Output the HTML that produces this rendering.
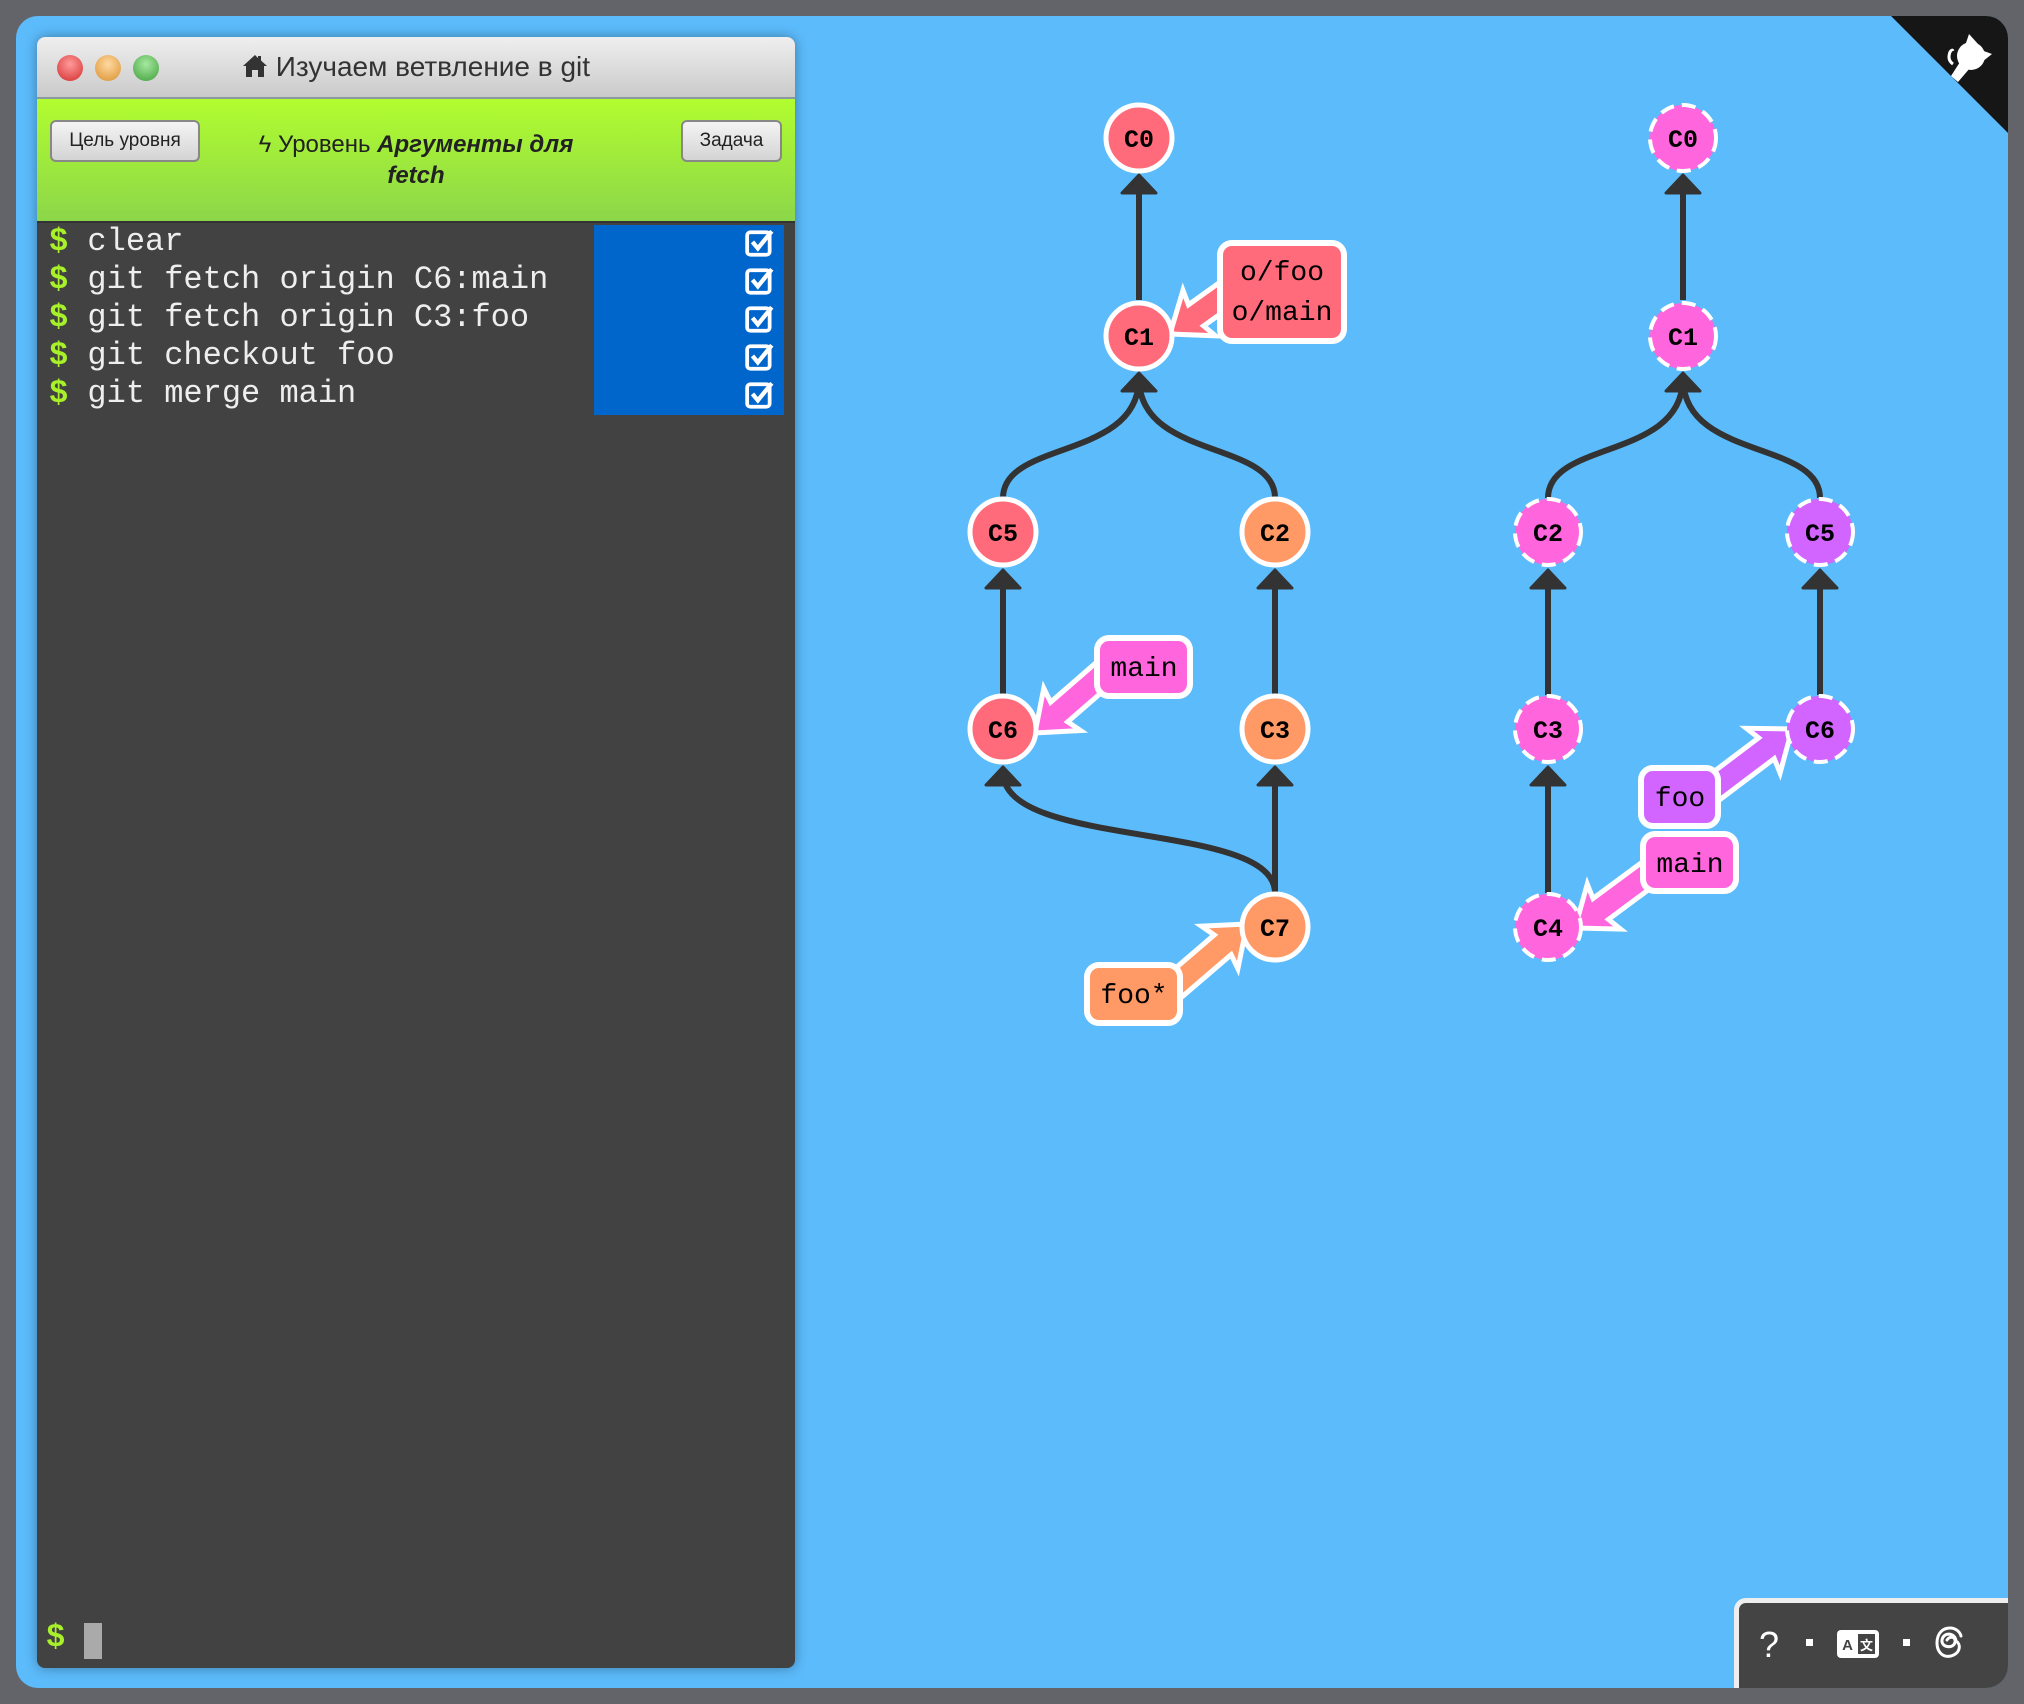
<!DOCTYPE html>
<html><head><meta charset="utf-8"><style>
html,body{margin:0;padding:0;width:2024px;height:1704px;overflow:hidden;background:#636469;font-family:"Liberation Sans","Noto Sans CJK SC",sans-serif}
#bg{position:absolute;left:16px;top:16px;width:1992px;height:1672px;background:#5cbbfb;border-radius:22px;overflow:hidden}
#term{position:absolute;left:37px;top:37px;width:758px;height:1631px;background:#424242;border-radius:8px;box-shadow:0 0 12px rgba(0,0,0,.35);overflow:hidden}
#tbar{position:absolute;left:0;top:0;width:100%;height:60px;background:linear-gradient(#efefef,#cacaca);border-bottom:2px solid #8a9aa0}
.tl{position:absolute;top:18px;width:26px;height:26px;border-radius:50%}
#title{position:absolute;left:0;width:100%;top:14px;text-align:center;font-size:28px;color:#333}
#green{position:absolute;left:0;top:62px;width:100%;height:122px;background:linear-gradient(#b2fd2f,#8cd64a)}
.btn{position:absolute;top:21px;height:38px;border:2px solid #888;border-radius:6px;background:linear-gradient(#f4f4f4,#d4d4d4);font-size:19px;line-height:38px;text-align:center;color:#222}
#lvl{position:absolute;left:209px;width:340px;top:30px;text-align:center;font-size:24px;line-height:31px;color:#222}
#cmds{position:absolute;left:0;top:184px;width:100%;border-top:2px solid #333}
.ln{position:absolute;left:12px;font-family:"Liberation Mono",monospace;font-size:32px;color:#eee;white-space:pre}
.ln b{color:#a8f02a}
#blue{position:absolute;left:557px;top:2px;width:190px;height:190px;background:#0066cc}
.cb{position:absolute;left:151px}
</style></head><body>
<div id="bg">
<svg width="1992" height="1672" style="position:absolute;left:0;top:0" viewBox="16 16 1992 1672">
<polygon points="1891,16 2008,16 2008,133" fill="#161616"/>
<g fill="#fff">
<circle cx="1971" cy="56" r="14"/>
<polygon points="1966,43 1969,34 1978,44"/>
<polygon points="1981,50 1992,54 1982,62"/>
<polygon points="1960,62 1970,68 1958,82 1951,76"/>
<path d="M1953,64 q-6,-4 -3,-12 q2,-3 3,-1" stroke="#fff" stroke-width="3" fill="none"/>
</g>
<g stroke="#333" stroke-width="6" fill="none">
<line x1="1139" y1="300" x2="1139" y2="180"/>
<path d="M1003,498 C1003,440 1139,460 1139,378"/>
<path d="M1275,498 C1275,440 1139,460 1139,378"/>
<line x1="1003" y1="695" x2="1003" y2="575"/>
<line x1="1275" y1="695" x2="1275" y2="575"/>
<line x1="1275" y1="893" x2="1275" y2="775"/>
<path d="M1275,893 C1275,820 1003,850 1003,772"/>
<line x1="1683" y1="300" x2="1683" y2="180"/>
<path d="M1548,498 C1548,440 1683,460 1683,378"/>
<path d="M1820,498 C1820,440 1683,460 1683,378"/>
<line x1="1548" y1="695" x2="1548" y2="575"/>
<line x1="1820" y1="695" x2="1820" y2="575"/>
<line x1="1548" y1="893" x2="1548" y2="775"/>
</g>
<g fill="#333" stroke="#333" stroke-width="3" stroke-linejoin="round">
<polygon points="1139,175 1122,193 1156,193"/>
<polygon points="1139,373 1122,391 1156,391"/>
<polygon points="1003,570 986,588 1020,588"/>
<polygon points="1275,570 1258,588 1292,588"/>
<polygon points="1003,767 986,785 1020,785"/>
<polygon points="1275,767 1258,785 1292,785"/>
<polygon points="1683,175 1666,193 1700,193"/>
<polygon points="1683,373 1666,391 1700,391"/>
<polygon points="1548,570 1531,588 1565,588"/>
<polygon points="1820,570 1803,588 1837,588"/>
<polygon points="1548,767 1531,785 1565,785"/>
</g>
<g stroke="#fff" stroke-width="5" stroke-linejoin="miter">
<polygon transform="translate(1170,334) rotate(-35.6)" points="0,0 36,-28 32,-13 80,-13 80,13 32,13 36,28" fill="#ff6b7a"/>
<polygon transform="translate(1035,733) rotate(-41)" points="0,0 36,-28 32,-13 100,-13 100,13 32,13 36,28" fill="#ff66dd"/>
<polygon transform="translate(1247,924) rotate(139.4)" points="0,0 36,-28 32,-13 100,-13 100,13 32,13 36,28" fill="#ff9966"/>
<polygon transform="translate(1792,729) rotate(143)" points="0,0 36,-28 32,-13 105,-13 105,13 32,13 36,28" fill="#d264ff"/>
<polygon transform="translate(1575,928) rotate(-36.5)" points="0,0 36,-28 32,-13 100,-13 100,13 32,13 36,28" fill="#ff66dd"/>
</g>
<g stroke="#fff" stroke-width="5">
<circle cx="1139" cy="138" r="33" fill="#ff6b7a"/>
<circle cx="1139" cy="336" r="33" fill="#ff6b7a"/>
<circle cx="1003" cy="532" r="33" fill="#ff6b7a"/>
<circle cx="1275" cy="532" r="33" fill="#ff9966"/>
<circle cx="1003" cy="729" r="33" fill="#ff6b7a"/>
<circle cx="1275" cy="729" r="33" fill="#ff9966"/>
<circle cx="1275" cy="927" r="33" fill="#ff9966"/>
</g>
<g stroke="#fff" stroke-width="4" stroke-dasharray="14,8">
<circle cx="1683" cy="138" r="33" fill="#ff66dd"/>
<circle cx="1683" cy="336" r="33" fill="#ff66dd"/>
<circle cx="1548" cy="532" r="33" fill="#ff66dd"/>
<circle cx="1820" cy="532" r="33" fill="#d264ff"/>
<circle cx="1548" cy="729" r="33" fill="#ff66dd"/>
<circle cx="1820" cy="729" r="33" fill="#d264ff"/>
<circle cx="1548" cy="927" r="33" fill="#ff66dd"/>
</g>
<g font-family="Liberation Mono,monospace" font-weight="bold" font-size="25" text-anchor="middle" fill="#000">
<text x="1139" y="147">C0</text><text x="1139" y="345">C1</text><text x="1003" y="541">C5</text><text x="1275" y="541">C2</text><text x="1003" y="738">C6</text><text x="1275" y="738">C3</text><text x="1275" y="936">C7</text>
<text x="1683" y="147">C0</text><text x="1683" y="345">C1</text><text x="1548" y="541">C2</text><text x="1820" y="541">C5</text><text x="1548" y="738">C3</text><text x="1820" y="738">C6</text><text x="1548" y="936">C4</text>
</g>
<g stroke="#fff" stroke-width="6">
<rect x="1220" y="243" width="124" height="98" rx="12" fill="#ff6b7a"/>
<rect x="1097" y="638" width="93" height="58" rx="12" fill="#ff66dd"/>
<rect x="1087" y="965" width="93" height="58" rx="12" fill="#ff9966"/>
<rect x="1641" y="768" width="77" height="58" rx="12" fill="#d264ff"/>
<rect x="1643" y="834" width="93" height="57" rx="12" fill="#ff66dd"/>
</g>
<g font-family="Liberation Mono,monospace" font-size="28" text-anchor="middle" fill="#000">
<text x="1282" y="280">o/foo</text><text x="1282" y="320">o/main</text>
<text x="1144" y="676">main</text><text x="1134" y="1003">foo*</text>
<text x="1680" y="806">foo</text><text x="1690" y="872">main</text>
</g>
</svg>
<div style="position:absolute;left:1718px;top:1582px;width:280px;height:100px;background:#444;border-top:5px solid #eee;border-left:5px solid #eee;border-radius:12px 0 12px 0"></div>
<div style="position:absolute;left:1743px;top:1608px;color:#fff;font-size:36px">?</div>
<div style="position:absolute;left:1790px;top:1623px;width:7px;height:7px;background:#fff"></div>
<svg style="position:absolute;left:1821px;top:1614px" width="42" height="28" viewBox="0 0 42 28"><rect x="0" y="0" width="42" height="28" rx="4" fill="#fff"/><rect x="21" y="4" width="17" height="20" fill="#444"/><text x="10.5" y="20" font-family="Liberation Sans" font-weight="bold" font-size="15" text-anchor="middle" fill="#444">A</text><text x="29.5" y="20" font-family="Noto Sans CJK SC" font-weight="bold" font-size="13" text-anchor="middle" fill="#fff">文</text></svg>
<div style="position:absolute;left:1887px;top:1623px;width:7px;height:7px;background:#fff"></div>
<svg style="position:absolute;left:1918px;top:1610px" width="30" height="34" viewBox="0 0 30 34"><path d="M22,15 C21,6 9,6 8,14 C7,22 20,23 21,16 C22,10 15,10 13,14 M22,15 C27,18 27,27 17,30 C8,32 3,25 3,17 C3,7 9,2 16,2 C22,2 26,6 27,10" fill="none" stroke="#fff" stroke-width="3" stroke-linecap="round"/></svg>
</div>
<div id="term">
<div id="tbar">
<div class="tl" style="left:20px;background:radial-gradient(circle at 50% 35%,#ff9a9a,#d32d2d)"></div>
<div class="tl" style="left:58px;background:radial-gradient(circle at 50% 35%,#ffd9a0,#d9902e)"></div>
<div class="tl" style="left:96px;background:radial-gradient(circle at 50% 35%,#a6e8a0,#3f9f3a)"></div>
<div id="title"><svg width="26" height="24" viewBox="0 0 26 24" style="vertical-align:-2px"><path d="M13,1 L1,12 L4,12 L4,23 L10,23 L10,16 L16,16 L16,23 L22,23 L22,12 L25,12 L19,6.5 L19,2 L16,2 L16,4 Z" fill="#333"/></svg> Изучаем ветвление в git</div>
</div>
<div id="green">
<div class="btn" style="left:13px;width:146px">Цель уровня</div>
<div class="btn" style="left:644px;width:97px">Задача</div>
<div id="lvl">ϟ Уровень <b><i>Аргументы для fetch</i></b></div>
</div>
<div id="cmds">
<div id="blue">
<svg class="cb" style="top:3px" width="30" height="30" viewBox="0 0 28 28"><rect x="2" y="4" width="21" height="21" rx="3" fill="none" stroke="#fff" stroke-width="3.5"/><path d="M7,13 L12,19 L25,3" fill="none" stroke="#fff" stroke-width="4"/></svg>
<svg class="cb" style="top:41px" width="30" height="30" viewBox="0 0 28 28"><rect x="2" y="4" width="21" height="21" rx="3" fill="none" stroke="#fff" stroke-width="3.5"/><path d="M7,13 L12,19 L25,3" fill="none" stroke="#fff" stroke-width="4"/></svg>
<svg class="cb" style="top:79px" width="30" height="30" viewBox="0 0 28 28"><rect x="2" y="4" width="21" height="21" rx="3" fill="none" stroke="#fff" stroke-width="3.5"/><path d="M7,13 L12,19 L25,3" fill="none" stroke="#fff" stroke-width="4"/></svg>
<svg class="cb" style="top:117px" width="30" height="30" viewBox="0 0 28 28"><rect x="2" y="4" width="21" height="21" rx="3" fill="none" stroke="#fff" stroke-width="3.5"/><path d="M7,13 L12,19 L25,3" fill="none" stroke="#fff" stroke-width="4"/></svg>
<svg class="cb" style="top:155px" width="30" height="30" viewBox="0 0 28 28"><rect x="2" y="4" width="21" height="21" rx="3" fill="none" stroke="#fff" stroke-width="3.5"/><path d="M7,13 L12,19 L25,3" fill="none" stroke="#fff" stroke-width="4"/></svg>
</div>
<div class="ln" style="top:0">  <b style="position:absolute;left:0">$</b>clear</div>
<div class="ln" style="top:38px">  <b style="position:absolute;left:0">$</b>git fetch origin C6:main</div>
<div class="ln" style="top:76px">  <b style="position:absolute;left:0">$</b>git fetch origin C3:foo</div>
<div class="ln" style="top:114px">  <b style="position:absolute;left:0">$</b>git checkout foo</div>
<div class="ln" style="top:152px">  <b style="position:absolute;left:0">$</b>git merge main</div>
</div>
<div class="ln" style="top:1582px;left:9px"><b>$</b></div>
<div style="position:absolute;left:47px;top:1586px;width:18px;height:36px;background:#aaa"></div>
</div>
</body></html>
